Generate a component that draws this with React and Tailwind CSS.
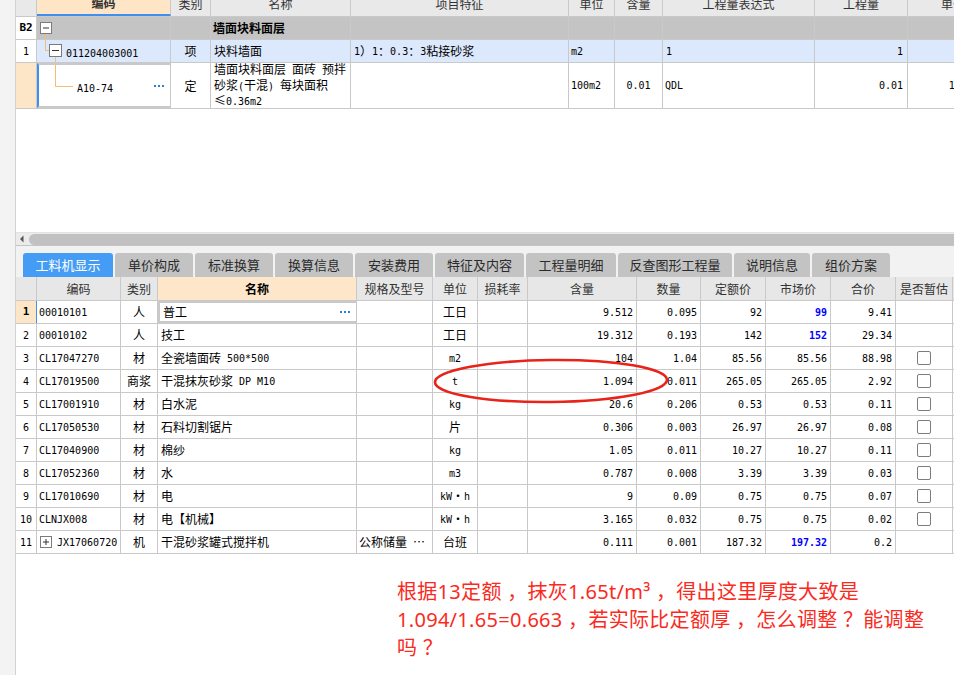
import React from 'react';

const CJK_RE = /([\u2026\u2264\u2E80-\u9FFF\uFF00-\uFFEF\u3000-\u30FF【】]+)/;
const CJK = "font-['Noto_Sans_CJK_SC',sans-serif]";
const MONO = "font-['DejaVu_Sans_Mono',monospace]";

// splits a cell string so Chinese runs get the CJK face and the rest the mono face
function T({ s, cjk = 'text-[12px]', lat = 'text-[10px]' }) {
  return String(s)
    .split(CJK_RE)
    .map((p, i) =>
      p === '' ? null : i % 2 === 1 ? (
        <span key={i} className={`${CJK} ${cjk}`}>{p}</span>
      ) : (
        <span key={i} className={`${MONO} ${lat} whitespace-pre`}>{p}</span>
      )
    );
}

const Dots = () => (
  <div className="ml-auto mr-[6px] flex gap-[2px] shrink-0">
    <div className="w-[2px] h-[2px] bg-[#2f7fd8]" />
    <div className="w-[2px] h-[2px] bg-[#2f7fd8]" />
    <div className="w-[2px] h-[2px] bg-[#2f7fd8]" />
  </div>
);

const TOP_W = ['w-[21px]', 'w-[134px]', 'w-[40px]', 'w-[140px]', 'w-[218px]', 'w-[46px]', 'w-[48px]', 'w-[152px]', 'w-[93px]', 'w-[88px]'];
const TOP_HEAD = ['', '编码', '类别', '名称', '项目特征', '单位', '含量', '工程量表达式', '工程量', '单价'];

const BW = ['w-[21px]', 'w-[84px]', 'w-[37px]', 'w-[199px]', 'w-[76px]', 'w-[45px]', 'w-[50px]', 'w-[109px]', 'w-[64px]', 'w-[65px]', 'w-[65px]', 'w-[65px]', 'w-[57px]'];
const B_HEAD = ['', '编码', '类别', '名称', '规格及型号', '单位', '损耗率', '含量', '数量', '定额价', '市场价', '合价', '是否暂估'];

const rows = [
  ['1', '00010101', '人', '普工', '', '工日', '', '9.512', '0.095', '92', '99', '9.41', false, true],
  ['2', '00010102', '人', '技工', '', '工日', '', '19.312', '0.193', '142', '152', '29.34', false, true],
  ['3', 'CL17047270', '材', '全瓷墙面砖 500*500', '', 'm2', '', '104', '1.04', '85.56', '85.56', '88.98', true, false],
  ['4', 'CL17019500', '商浆', '干混抹灰砂浆 DP M10', '', 't', '', '1.094', '0.011', '265.05', '265.05', '2.92', true, false],
  ['5', 'CL17001910', '材', '白水泥', '', 'kg', '', '20.6', '0.206', '0.53', '0.53', '0.11', true, false],
  ['6', 'CL17050530', '材', '石料切割锯片', '', '片', '', '0.306', '0.003', '26.97', '26.97', '0.08', true, false],
  ['7', 'CL17040900', '材', '棉纱', '', 'kg', '', '1.05', '0.011', '10.27', '10.27', '0.11', true, false],
  ['8', 'CL17052360', '材', '水', '', 'm3', '', '0.787', '0.008', '3.39', '3.39', '0.03', true, false],
  ['9', 'CL17010690', '材', '电', '', 'kW・h', '', '9', '0.09', '0.75', '0.75', '0.07', true, false],
  ['10', 'CLNJX008', '材', '电【机械】', '', 'kW・h', '', '3.165', '0.032', '0.75', '0.75', '0.02', true, false],
  ['11', 'JX17060720', '机', '干混砂浆罐式搅拌机', '公称储量 …', '台班', '', '0.111', '0.001', '187.32', '197.32', '0.2', false, true],
];

const tabs = [
  ['工料机显示', 'w-[90px]'],
  ['单价构成', 'w-[78px]'],
  ['标准换算', 'w-[78px]'],
  ['换算信息', 'w-[78px]'],
  ['安装费用', 'w-[78px]'],
  ['特征及内容', 'w-[89px]'],
  ['工程量明细', 'w-[90px]'],
  ['反查图形工程量', 'w-[114px]'],
  ['说明信息', 'w-[76px]'],
  ['组价方案', 'w-[78px]'],
];

const cell = 'shrink-0 h-full border-r border-[#c9c9c9] flex items-center overflow-hidden whitespace-nowrap';

function TopGrid() {
  return (
    <div className="shrink-0 flex flex-col text-black">
      {/* header, top half scrolled out of view */}
      <div className="h-[17px] overflow-hidden shrink-0">
        <div className="-mt-[8px] h-[25px] flex border-b border-[#c9c9c9] bg-[#e9e9e9]">
          {TOP_HEAD.map((h, i) => (
            <div
              key={i}
              className={`${TOP_W[i]} ${cell} justify-center ${CJK} text-[12px] text-[#333] ${
                i === 1 ? 'bg-[#fde5c6] font-bold border-b-2 border-b-[#3f8ff0]' : ''
              } ${i === 9 ? 'justify-start pl-[33px]' : ''}`}
            >
              {h}
            </div>
          ))}
        </div>
      </div>

      {/* B2 section row */}
      <div className="h-[23px] flex border-b border-[#c9c9c9] bg-[#c4c4c4]">
        <div className={`${TOP_W[0]} ${cell} justify-center bg-white`}>
          <T s="B2" lat="text-[11px] font-bold" />
        </div>
        <div className={`${TOP_W[1]} ${cell}`}>
          <svg width="20" height="22" className="shrink-0">
            <line x1="8.5" y1="16" x2="8.5" y2="22" stroke="#f3bd74" />
            <rect x="3.5" y="5.5" width="11" height="11" fill="#fff" stroke="#7b7b7b" />
            <line x1="6" y1="11" x2="12" y2="11" stroke="#333" />
          </svg>
        </div>
        <div className={`${TOP_W[2]} ${cell}`} />
        <div className={`${TOP_W[3]} ${cell} pl-[2px]`}>
          <T s="墙面块料面层" cjk="text-[12px] font-bold" />
        </div>
        {TOP_W.slice(4).map((w, i) => (
          <div key={i} className={`${w} ${cell}`} />
        ))}
      </div>

      {/* bill item row */}
      <div className="h-[23px] flex border-b border-[#c9c9c9]">
        <div className={`${TOP_W[0]} ${cell} justify-center bg-white`}>
          <T s="1" />
        </div>
        <div className={`${TOP_W[1]} ${cell} bg-[#dce8fb]`}>
          <svg width="28" height="22" className="shrink-0">
            <path d="M8.5 0 V10.5 H12" fill="none" stroke="#f3bd74" />
            <line x1="18.5" y1="17" x2="18.5" y2="22" stroke="#f3bd74" />
            <rect x="12.5" y="4.5" width="12" height="12" fill="#fff" stroke="#7b7b7b" />
            <line x1="15" y1="10.5" x2="22" y2="10.5" stroke="#333" />
          </svg>
          <span className="ml-[1px]">
            <T s="011204003001" />
          </span>
        </div>
        <div className={`${TOP_W[2]} ${cell} justify-center bg-[#dce8fb]`}>
          <T s="项" />
        </div>
        <div className={`${TOP_W[3]} ${cell} pl-[3px] bg-[#dce8fb]`}>
          <T s="块料墙面" />
        </div>
        <div className={`${TOP_W[4]} ${cell} pl-[3px] bg-[#dce8fb]`}>
          <T s="1）1：0.3：3粘接砂浆" />
        </div>
        <div className={`${TOP_W[5]} ${cell} pl-[2px] bg-[#dce8fb]`}>
          <T s="m2" />
        </div>
        <div className={`${TOP_W[6]} ${cell} bg-[#dce8fb]`} />
        <div className={`${TOP_W[7]} ${cell} pl-[3px] bg-[#dce8fb]`}>
          <T s="1" />
        </div>
        <div className={`${TOP_W[8]} ${cell} justify-end pr-[4px] bg-[#dce8fb]`}>
          <T s="1" />
        </div>
        <div className={`${TOP_W[9]} ${cell} bg-[#dce8fb]`} />
      </div>

      {/* quota row */}
      <div className="h-[46px] flex border-b border-[#c9c9c9]">
        <div className={`${TOP_W[0]} ${cell} bg-[#fde6c8]`} />
        <div className={`${TOP_W[1]} ${cell} border-2 border-[#7e7e7e] border-l-[#3f8ff0]`}>
          <svg width="36" height="41" className="shrink-0">
            <path d="M16.5 0 V21.5 H34" fill="none" stroke="#f3bd74" />
          </svg>
          <span className="ml-[2px]">
            <T s="A10-74" />
          </span>
          <Dots />
        </div>
        <div className={`${TOP_W[2]} ${cell} justify-center`}>
          <T s="定" />
        </div>
        <div className={`${TOP_W[3]} ${cell} pl-[3px] flex-col items-start justify-center leading-[13.5px]`}>
          <div><T s="墙面块料面层 面砖 预拌" /></div>
          <div><T s="砂浆(干混) 每块面积" /></div>
          <div><T s="≤0.36m2" /></div>
        </div>
        <div className={`${TOP_W[4]} ${cell}`} />
        <div className={`${TOP_W[5]} ${cell} pl-[2px]`}>
          <T s="100m2" />
        </div>
        <div className={`${TOP_W[6]} ${cell} justify-center`}>
          <T s="0.01" />
        </div>
        <div className={`${TOP_W[7]} ${cell} pl-[2px]`}>
          <T s="QDL" />
        </div>
        <div className={`${TOP_W[8]} ${cell} justify-end pr-[4px]`}>
          <T s="0.01" />
        </div>
        <div className={`${TOP_W[9]} ${cell} justify-end pr-[4px]`}>
          <T s="1365.14" />
        </div>
      </div>
    </div>
  );
}

function Checkbox() {
  return <div className="w-[14px] h-[14px] border border-[#7c7c7c] rounded-[2px] bg-white" />;
}

function LowerGrid() {
  return (
    <div className="relative shrink-0 flex flex-col text-black">
      <div className="h-[24px] flex border-b border-[#c9c9c9] bg-[#e7e7e7]">
        {B_HEAD.map((h, i) => (
          <div
            key={i}
            className={`${BW[i]} ${cell} justify-center ${CJK} text-[12px] text-[#333] ${
              i === 3 ? 'bg-[#fde6c9] font-bold text-black' : ''
            }`}
          >
            {h}
          </div>
        ))}
      </div>
      {rows.map((r, ri) => {
        const first = ri === 0;
        return (
          <div key={ri} className="h-[23px] flex border-b border-[#c9c9c9]">
            <div className={`${BW[0]} ${cell} justify-center ${first ? 'bg-[#fde6c8] border-r-[#3f8ff0]' : ''}`}>
              <T s={r[0]} lat={first ? 'text-[11px] font-bold' : 'text-[10px]'} />
            </div>
            <div className={`${BW[1]} ${cell} pl-[2px]`}>
              {ri === 10 && (
                <svg width="18" height="14" className="shrink-0">
                  <rect x="1.5" y="1.5" width="11" height="11" fill="#fff" stroke="#7b7b7b" />
                  <line x1="4" y1="7" x2="10" y2="7" stroke="#333" />
                  <line x1="7" y1="4" x2="7" y2="10" stroke="#333" />
                </svg>
              )}
              <T s={r[1]} />
            </div>
            <div className={`${BW[2]} ${cell} justify-center`}>
              <T s={r[2]} />
            </div>
            <div className={`${BW[3]} ${cell} pl-[3px] ${first ? 'border-2 border-[#3c8ef3] pl-[2px]' : ''}`}>
              <T s={r[3]} />
              {first && <Dots />}
            </div>
            <div className={`${BW[4]} ${cell} pl-[2px]`}>
              <T s={r[4]} />
            </div>
            <div className={`${BW[5]} ${cell} justify-center`}>
              <T s={r[5]} />
            </div>
            <div className={`${BW[6]} ${cell}`} />
            {[7, 8, 9].map((c) => (
              <div key={c} className={`${BW[c]} ${cell} justify-end pr-[3px]`}>
                <T s={r[c]} />
              </div>
            ))}
            <div className={`${BW[10]} ${cell} justify-end pr-[3px]`}>
              <T s={r[10]} lat={r[13] ? 'text-[10px] font-bold text-[#0000ff]' : 'text-[10px]'} />
            </div>
            <div className={`${BW[11]} ${cell} justify-end pr-[3px]`}>
              <T s={r[11]} />
            </div>
            <div className={`${BW[12]} ${cell} justify-center`}>{r[12] && <Checkbox />}</div>
          </div>
        );
      })}

      {/* red hand-drawn ellipse around 单位 t / 含量 1.094 */}
      <svg className="absolute left-0 top-0 w-full h-full pointer-events-none" overflow="visible">
        <ellipse
          cx="535"
          cy="104"
          rx="116"
          ry="21"
          fill="none"
          stroke="#e8231a"
          strokeWidth="2.6"
          transform="rotate(-0.6 535 104)"
        />
      </svg>
    </div>
  );
}

export default function App() {
  return (
    <div className="w-[954px] h-[675px] overflow-hidden bg-white flex">
      <div className="w-[16px] shrink-0 bg-[#f3f3f3] border-r border-[#d2d2d2]" />
      <div className="flex-1 min-w-0 flex flex-col overflow-hidden">
        <TopGrid />
        <div className="h-[123px] shrink-0 bg-white" />

        {/* horizontal scrollbar */}
        <div className="h-[13px] shrink-0 border-t border-[#e3e3e3] bg-[#ebebeb] flex items-center">
          <svg width="13" height="12" className="shrink-0">
            <path d="M4 6 L7.5 2.5 V9.5 Z" fill="#555" />
          </svg>
          <div className="flex-1 h-[11px] rounded-l-full bg-[#c1c1c1]" />
        </div>

        {/* tab strip */}
        <div className="h-[32px] shrink-0 border-t border-[#c4c4c4] bg-[#f2f2f2] flex items-end pl-[7px] gap-[2px]">
          {tabs.map(([t, w], i) => (
            <div
              key={t}
              className={`${w} h-[24px] shrink-0 rounded-t-[3px] flex items-center justify-center ${CJK} text-[13px] ${
                i === 0 ? 'bg-[#449cf5] text-white' : 'bg-[#c3c3c3] text-[#2b2b2b]'
              }`}
            >
              {t}
            </div>
          ))}
        </div>

        <LowerGrid />

        <div className="mt-[24px] pl-[381px] font-['Noto_Sans','Noto_Sans_CJK_SC',sans-serif] text-[20px] leading-[28px] text-[#fa2a1e] whitespace-pre tracking-[0.3px]">
          <div>根据13定额 ，抹灰1.65t/m³ ，得出这里厚度大致是</div>
          <div>1.094/1.65=0.663 ，若实际比定额厚 ，怎么调整 ？能调整</div>
          <div>吗 ？</div>
        </div>
      </div>
    </div>
  );
}
